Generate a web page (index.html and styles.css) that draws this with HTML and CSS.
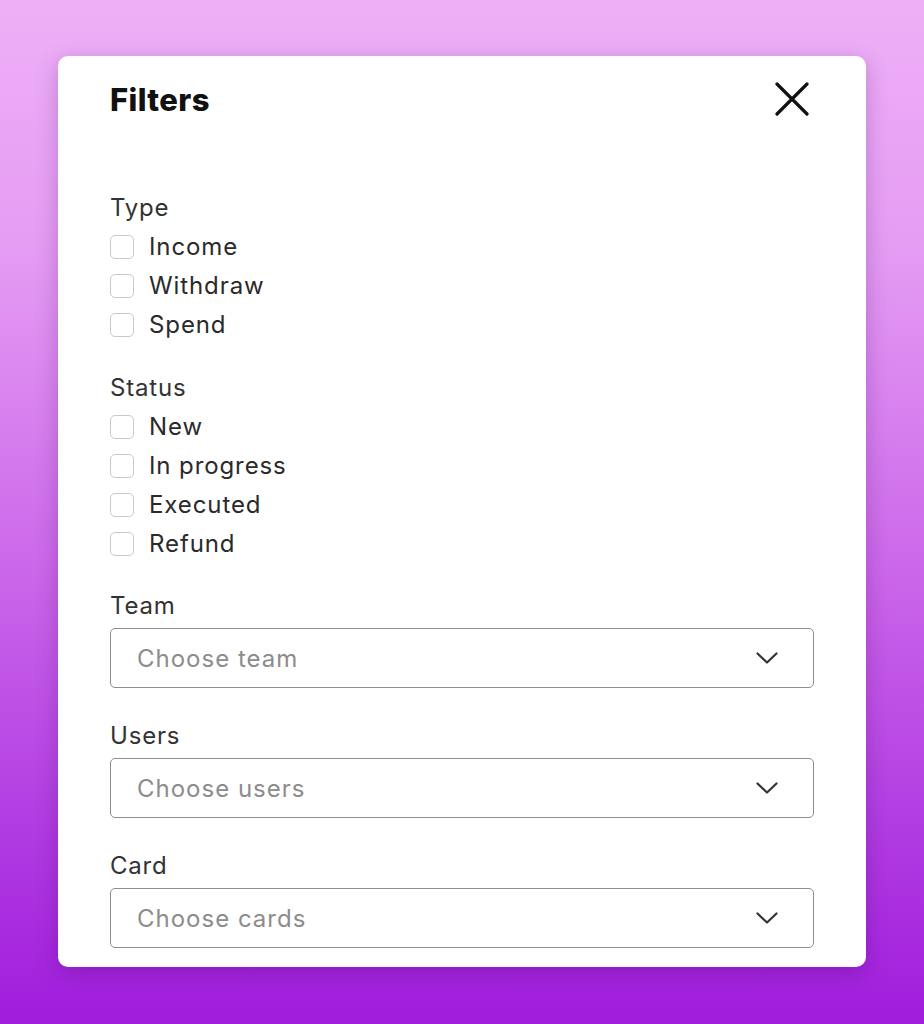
FILE: index.html
```html
<!DOCTYPE html>
<html lang="en">
<head>
<meta charset="utf-8">
<title>Filters</title>
<link rel="stylesheet" href="styles.css">
</head>
<body>
<div class="panel">
  <div class="header">
    <h1 class="title">Filters</h1>
    <button class="close" aria-label="Close">
      <svg width="34" height="34" viewBox="0 0 34 34"><path d="M2 2 L32 32 M32 2 L2 32" stroke="#111" stroke-width="3.2" stroke-linecap="round" fill="none"/></svg>
    </button>
  </div>

  <div class="group">
    <div class="label">Type</div>
    <label class="check"><span class="box"></span>Income</label>
    <label class="check"><span class="box"></span>Withdraw</label>
    <label class="check"><span class="box"></span>Spend</label>
  </div>

  <div class="group group-last">
    <div class="label">Status</div>
    <label class="check"><span class="box"></span>New</label>
    <label class="check"><span class="box"></span>In progress</label>
    <label class="check"><span class="box"></span>Executed</label>
    <label class="check"><span class="box"></span>Refund</label>
  </div>

  <div class="field">
    <div class="label">Team</div>
    <div class="select"><span class="placeholder">Choose team</span>
      <svg class="chev" width="22" height="12" viewBox="0 0 22 12"><polyline points="1.5,1.5 11,10.5 20.5,1.5" fill="none" stroke="#333" stroke-width="2.2" stroke-linecap="round" stroke-linejoin="round"/></svg>
    </div>
  </div>

  <div class="field">
    <div class="label">Users</div>
    <div class="select"><span class="placeholder">Choose users</span>
      <svg class="chev" width="22" height="12" viewBox="0 0 22 12"><polyline points="1.5,1.5 11,10.5 20.5,1.5" fill="none" stroke="#333" stroke-width="2.2" stroke-linecap="round" stroke-linejoin="round"/></svg>
    </div>
  </div>

  <div class="field">
    <div class="label">Card</div>
    <div class="select"><span class="placeholder">Choose cards</span>
      <svg class="chev" width="22" height="12" viewBox="0 0 22 12"><polyline points="1.5,1.5 11,10.5 20.5,1.5" fill="none" stroke="#333" stroke-width="2.2" stroke-linecap="round" stroke-linejoin="round"/></svg>
    </div>
  </div>
</div>
</body>
</html>
```
FILE: styles.css
```css
html, body {
  margin: 0;
  padding: 0;
}
body {
  width: 924px;
  height: 1024px;
  overflow: hidden;
  background: linear-gradient(180deg, #efb0f7 0%, #e49bf3 25%, #cc68ea 55%, #b23de2 80%, #a01ddc 100%);
  font-family: "Inter", "Noto Sans", sans-serif;
  color: #2b2b2b;
  padding-top: 56px;
  box-sizing: border-box;
}
.panel {
  margin-left: 58px;
  width: 808px;
  height: 911px;
  box-sizing: border-box;
  background: #fff;
  border-radius: 10px;
  box-shadow: 0 6px 22px rgba(60, 0, 90, 0.25);
  padding: 24px 52px 17px;
}
.header {
  display: flex;
  justify-content: space-between;
  align-items: center;
  height: 38px;
  margin-bottom: 70px;
  padding-right: 5px;
}
.title {
  margin: 0;
  font-family: "Inter", sans-serif;
  font-weight: 800;
  font-size: 31px;
  color: #111;
  letter-spacing: 0.4px;
}
.close {
  border: 0;
  background: none;
  padding: 0;
  display: flex;
  cursor: pointer;
}
.group {
  display: flex;
  flex-direction: column;
  margin-bottom: 24px;
}
.group-last {
  margin-bottom: 23px;
}
.label {
  font-size: 24px;
  letter-spacing: 0.8px;
  line-height: 39px;
  height: 39px;
  color: #333;
}
.check {
  display: flex;
  align-items: center;
  gap: 15px;
  height: 39px;
  font-size: 24px;
  letter-spacing: 0.9px;
  color: #2a2a2a;
}
.box {
  width: 22px;
  height: 22px;
  border: 1.5px solid #c9c9c9;
  border-radius: 5px;
  flex: none;
}
.field {
  display: flex;
  flex-direction: column;
  margin-bottom: 28px;
}
.field:last-child {
  margin-bottom: 0;
}
.select {
  margin-top: 3px;
  height: 60px;
  box-sizing: border-box;
  border: 1.5px solid #8e8e8e;
  border-radius: 5px;
  display: flex;
  align-items: center;
  justify-content: space-between;
  padding: 0 35px 0 26px;
}
.placeholder {
  font-size: 24px;
  letter-spacing: 1px;
  color: #8c8c8c;
}
.chev {
  display: block;
}
```
